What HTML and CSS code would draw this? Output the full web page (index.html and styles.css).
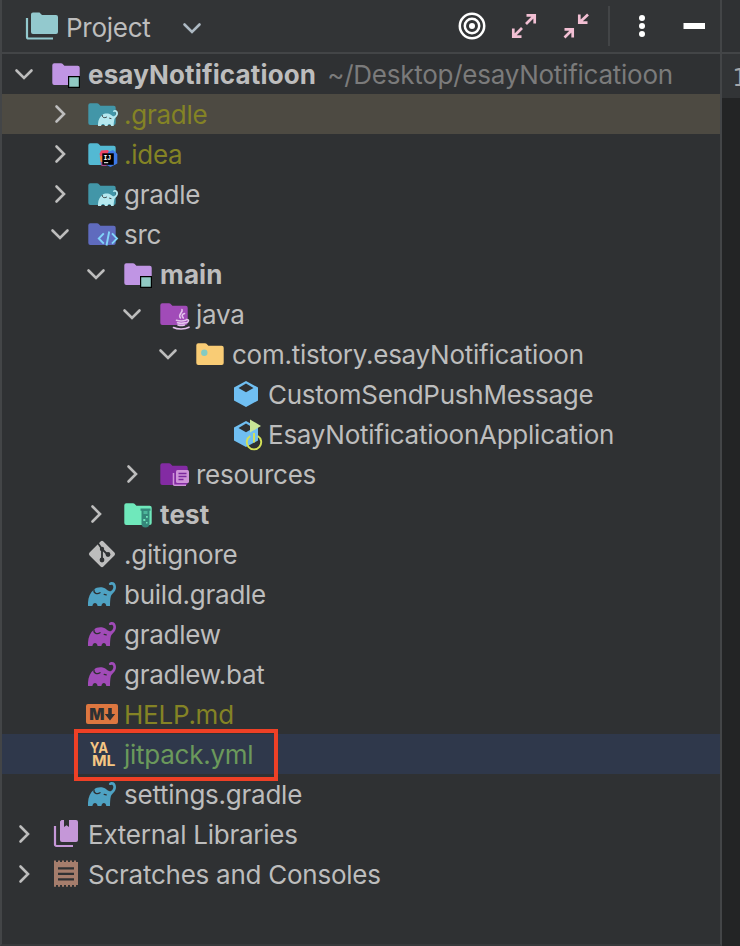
FILE: index.html
```
<!DOCTYPE html>
<html lang="en">
<head>
  <meta charset="UTF-8" />
  <title>Project</title>
  <meta name="viewport" content="width=device-width, initial-scale=1.0" />
  <link rel="stylesheet" href="styles.css">
</head>
<body>
  <!-- Shared icon shapes -->
  <svg class="sprite" width="0" height="0">
    <symbol id="folder" viewBox="0 0 32 32">
      <path d="M4.3 5.2h6.8c.6 0 1 .2 1.4.6l1.9 1.9h13.3a2 2 0 0 1 2 2v15.2a2 2 0 0 1-2 2H4.3a2 2 0 0 1-2-2V7.2a2 2 0 0 1 2-2z" fill="currentColor"/>
    </symbol>
    <symbol id="elephant" viewBox="0 0 28 24" preserveAspectRatio="none">
      <path d="M0 24C-.4 17 1.5 11 6 7.500 8.5 4.800 15 4.500 18 7c1.800 1.600 3.300 2.800 5 2 2.500-1.200 3-4.800 1.500-6-1-.8-2.200.4-3.200-.2-1-.8 0-2.200 1.200-2.500C25.500-.6 28 1.500 28 5c0 5-4.500 6.500-5.200 9.500-.6 2.500-.8 6.500-.8 9.500h-3.700c-.3-4-4.500-4-4.900 0H9.600c-.4-4-4.800-4-5.200 0z" fill="currentColor"/>
      <path class="ear" d="M6 8c-.6 3.200 3.200 4.700 6 2.700M16.200 12.300l2 .5" fill="none" stroke-width="1.3" stroke-linecap="round"/>
    </symbol>
    <symbol id="down" viewBox="0 0 32 32">
      <path d="M8.500 12.500l7.500 7.500 7.500-7.500" fill="none" stroke="currentColor" stroke-width="2.600" stroke-linecap="round"/>
    </symbol>
    <symbol id="right" viewBox="0 0 32 32">
      <path d="M12.500 8.500l7.500 7.500-7.500 7.500" fill="none" stroke="currentColor" stroke-width="2.600" stroke-linecap="round"/>
    </symbol>
    <symbol id="cube" viewBox="0 0 32 32">
      <path fill-rule="evenodd" d="M16 3l12 6.500v13L16 29 4 22.500v-13zM16 5.500L8.500 10 16 14.300 23.500 10z" fill="currentColor"/>
    </symbol>
  </svg>

  <div class="ide">
    <section class="tool-window">
      <header class="toolbar">
        <svg class="icon project-icon" viewBox="0 0 32 32">
          <path d="M7 2.500h6.500L16 5h14a2 2 0 0 1 2 2v15a2 2 0 0 1-2 2H7a2 2 0 0 1-2-2V4.500a2 2 0 0 1 2-2z" fill="#93c9ce"/>
          <path d="M1 8v19a1.500 1.500 0 0 0 1.500 1.500H27" fill="none" stroke="#93c9ce" stroke-width="2.200"/>
        </svg>
        <h1 class="title">Project</h1>
        <svg class="title-arrow" viewBox="0 0 32 32"><use href="#down"/></svg>
        <div class="actions">
          <svg class="icon" viewBox="0 0 32 32" fill="none" stroke="#fff">
            <circle cx="16" cy="16" r="12.200" stroke-width="2.500"/>
            <circle cx="16" cy="16" r="7.200" stroke-width="2.500"/>
            <circle cx="16" cy="16" r="3" fill="#fff" stroke="none"/>
          </svg>
          <svg class="icon" viewBox="0 0 32 32" fill="none" stroke="#f2bfd3" stroke-width="2.700">
            <path d="M18.500 5.300h8.200v8.200M26 6l-8 8M13.500 26.700H5.300v-8.200M6 26l8-8"/>
          </svg>
          <svg class="icon" viewBox="0 0 32 32" fill="none" stroke="#f2bfd3" stroke-width="2.700">
            <path d="M19.300 4.500v8.200h8.200M20 12l8-7.500M4.500 19.300h8.200v8.200M12 20l-7.500 7.500"/>
          </svg>
          <span class="separator"></span>
          <svg class="icon" viewBox="0 0 32 32" fill="#fff">
            <circle cx="16" cy="8" r="3"/><circle cx="16" cy="16" r="3"/><circle cx="16" cy="24" r="3"/>
          </svg>
          <svg class="icon minimize" viewBox="0 0 32 32"><path d="M5.500 13h21.500v6H5.500z" fill="#fff"/></svg>
        </div>
      </header>

      <ul class="tree">
        <li class="row">
          <svg class="twisty"><use href="#down"/></svg>
          <svg class="icon violet" viewBox="0 0 32 32"><use href="#folder"/><path d="M18.600 18.600h10.800v10.800H18.600z" fill="#90c9c3" stroke="#000" stroke-width="1.200"/></svg>
          <span class="name bold">esayNotificatioon</span>
          <span class="path">~/Desktop/esayNotificatioon</span>
        </li>
        <li class="row level-1 hovered">
          <svg class="twisty"><use href="#right"/></svg>
          <svg class="icon teal" viewBox="0 0 32 32"><use href="#folder"/><use class="pale" href="#elephant" x="12" y="12" width="20" height="16"/></svg>
          <span class="name ignored">.gradle</span>
        </li>
        <li class="row level-1">
          <svg class="twisty"><use href="#right"/></svg>
          <svg class="icon cyan" viewBox="0 0 32 32"><use href="#folder"/>
            <path d="M15 12.500l7-.5 3 5-10 4-1.500-5z" fill="#ee4466"/>
            <path d="M13.700 18l4 0v7.500l-3.200-2z" fill="#ef7b36"/>
            <path d="M14.500 24h8l-2 4-5 0z" fill="#a6478f"/>
            <path d="M22 14l5-2 4.300 4v9.500L24.500 29l-4-2z" fill="#3d79e8"/>
            <path d="M16.300 15.300h11.500v11.500H16.300z" fill="#000"/>
            <text class="ij" x="17.500" y="21.500" textLength="7.500">IJ</text>
            <path d="M18 24.200h4.200v1H18z" fill="#fff"/>
          </svg>
          <span class="name ignored">.idea</span>
        </li>
        <li class="row level-1">
          <svg class="twisty"><use href="#right"/></svg>
          <svg class="icon teal" viewBox="0 0 32 32"><use href="#folder"/><use class="pale" href="#elephant" x="12" y="12" width="20" height="16"/></svg>
          <span class="name">gradle</span>
        </li>
        <li class="row level-1">
          <svg class="twisty"><use href="#down"/></svg>
          <svg class="icon indigo" viewBox="0 0 32 32"><use href="#folder"/><path d="M17.800 15.300l-5 5.200 5 5.200M26 15.300l5 5.200-5 5.200M23.200 13.500l-2.700 14" fill="none" stroke="#81d4fa" stroke-width="1.900"/></svg>
          <span class="name">src</span>
        </li>
        <li class="row level-2">
          <svg class="twisty"><use href="#down"/></svg>
          <svg class="icon violet" viewBox="0 0 32 32"><use href="#folder"/><path d="M18.600 18.600h10.800v10.800H18.600z" fill="#90c9c3" stroke="#000" stroke-width="1.200"/></svg>
          <span class="name bold">main</span>
        </li>
        <li class="row level-3">
          <svg class="twisty"><use href="#down"/></svg>
          <svg class="icon purple" viewBox="0 0 32 32"><use href="#folder"/>
            <g fill="none" stroke="#e4c4ec" stroke-width="1.600" stroke-linecap="round">
              <path d="M24 11.500c1.500 3-4.800 4.500-1.500 8.500M26.500 15.500c-3 1-2.800 2.300-1.200 4.500"/>
              <path d="M18.500 22.300c3 .9 6.500.9 9.300 0M19.500 24.800c2.500.7 5 .7 7.500 0M20 27c2 .6 4.500.6 6.500 0M28.500 21.500c3-.4 2.500 3-.8 3.500"/>
              <path d="M15.500 29.500c4 2 11.500 2 15.500-.3"/>
            </g>
          </svg>
          <span class="name">java</span>
        </li>
        <li class="row level-4">
          <svg class="twisty"><use href="#down"/></svg>
          <svg class="icon amber" viewBox="0 0 32 32"><use href="#folder"/><circle cx="10.300" cy="14.800" r="3.200" fill="#83cbc3"/></svg>
          <span class="name">com.tistory.esayNotificatioon</span>
        </li>
        <li class="row level-5">
          <span class="twisty"></span>
          <svg class="icon sky" viewBox="0 0 32 32"><use href="#cube"/></svg>
          <span class="name">CustomSendPushMessage</span>
        </li>
        <li class="row level-5">
          <span class="twisty"></span>
          <svg class="icon sky" viewBox="0 0 32 32"><use href="#cube"/>
            <path d="M20 1.500l11 6.500-11 6.500z" fill="#c8e696"/>
            <path d="M20.300 18a7.200 7.200 0 1 0 7.400 0M24 15v9.500" fill="none" stroke="#d4e157" stroke-width="1.900"/>
          </svg>
          <span class="name">EsayNotificatioonApplication</span>
        </li>
        <li class="row level-3">
          <svg class="twisty"><use href="#right"/></svg>
          <svg class="icon plum" viewBox="0 0 32 32"><use href="#folder"/>
            <rect x="18" y="12" width="13" height="13" rx="1.500" fill="#ce93d8"/>
            <path d="M15.500 15v11.300a1 1 0 0 0 1 1H28" fill="none" stroke="#ce93d8" stroke-width="1.500"/>
            <path d="M20.500 15.500h8M20.500 18.500h8M20.500 21.500h5" stroke="#7b2a9d" stroke-width="1.300"/>
          </svg>
          <span class="name">resources</span>
        </li>
        <li class="row level-2">
          <svg class="twisty"><use href="#right"/></svg>
          <svg class="icon mint" viewBox="0 0 32 32"><use href="#folder"/>
            <path d="M18.500 10.500h10v2.200h-1v12.800a4 4 0 0 1-8 0V12.700h-1z" fill="#35877a"/>
            <path d="M21.500 13h4v3h-4z" fill="#4db69b"/>
            <path d="M24 18h1.800v1.800H24zM21.300 21h2v2h-2zM24 24h1.500v1.500H24z" fill="#6fe8bb"/>
          </svg>
          <span class="name bold">test</span>
        </li>
        <li class="row level-1">
          <span class="twisty"></span>
          <svg class="icon" viewBox="0 0 32 32">
            <rect x="6.200" y="6.200" width="19.600" height="19.600" rx="2" transform="rotate(45 16 16)" fill="#bdbdbd"/>
            <path d="M11.500 4.500l4.500 6.500v12M16.500 11.500l5 5" fill="none" stroke="#2f3133" stroke-width="1.800"/>
            <g fill="#2f3133"><circle cx="16" cy="11" r="2.200"/><circle cx="16" cy="22" r="2.400"/><circle cx="22" cy="16.500" r="2.400"/></g>
          </svg>
          <span class="name">.gitignore</span>
        </li>
        <li class="row level-1">
          <span class="twisty"></span>
          <svg class="icon gradle-blue" viewBox="0 0 32 32"><use href="#elephant" x="2" y="4" width="28" height="24"/></svg>
          <span class="name">build.gradle</span>
        </li>
        <li class="row level-1">
          <span class="twisty"></span>
          <svg class="icon purple" viewBox="0 0 32 32"><use href="#elephant" x="2" y="4" width="28" height="24"/></svg>
          <span class="name">gradlew</span>
        </li>
        <li class="row level-1">
          <span class="twisty"></span>
          <svg class="icon purple" viewBox="0 0 32 32"><use href="#elephant" x="2" y="4" width="28" height="24"/></svg>
          <span class="name">gradlew.bat</span>
        </li>
        <li class="row level-1">
          <span class="twisty"></span>
          <svg class="icon" viewBox="0 0 32 32">
            <rect x="0" y="6" width="32" height="20" rx="2" fill="#dd7740"/>
            <text class="md" x="3.300" y="22" textLength="15" lengthAdjust="spacingAndGlyphs">M</text>
            <path d="M22.200 10h3.600v6h3.400L24 22.500 18.800 16h3.400z" fill="#2f3133"/>
          </svg>
          <span class="name ignored">HELP.md</span>
        </li>
        <li class="row level-1 selected">
          <span class="twisty"></span>
          <svg class="icon" viewBox="0 0 32 32">
            <text class="yaml" x="3.700" y="15" textLength="18.500" lengthAdjust="spacingAndGlyphs">YA</text>
            <text class="yaml" x="6" y="28" textLength="23.500" lengthAdjust="spacingAndGlyphs">ML</text>
          </svg>
          <span class="name added">jitpack.yml</span>
          <span class="marker"></span>
        </li>
        <li class="row level-1">
          <span class="twisty"></span>
          <svg class="icon gradle-blue" viewBox="0 0 32 32"><use href="#elephant" x="2" y="4" width="28" height="24"/></svg>
          <span class="name">settings.gradle</span>
        </li>
        <li class="row">
          <svg class="twisty"><use href="#right"/></svg>
          <svg class="icon" viewBox="0 0 32 32">
            <path d="M11.500 2H14v7l2.500-1.800L19 9V2h7a2 2 0 0 1 2 2v18a2 2 0 0 1-2 2H12a2 2 0 0 1-2-2V3.500z" fill="#c597d8"/>
            <path d="M5 8v18.500A1.500 1.500 0 0 0 6.500 28H23" fill="none" stroke="#c597d8" stroke-width="2.200"/>
          </svg>
          <span class="name">External Libraries</span>
        </li>
        <li class="row">
          <svg class="twisty"><use href="#right"/></svg>
          <svg class="icon" viewBox="0 0 32 32">
            <path d="M4 4h24v23H4z" fill="#a57d6c"/>
            <path d="M4 3.500h24M4 27.700h24" stroke="#a57d6c" stroke-width="2" stroke-dasharray="2 2"/>
            <path d="M8 10.300h16M8 15.800h16M8 21.300h16" stroke="#2f3133" stroke-width="2.300"/>
          </svg>
          <span class="name">Scratches and Consoles</span>
        </li>
      </ul>
    </section>

    <aside class="editor">
      <div class="tabs"></div>
      <div class="gutter">1</div>
    </aside>
  </div>
</body>
</html>
```
FILE: styles.css
```
:root {
  --bg: #2f3133;
  --bar: #323436;
  --line: #434547;
  --text: #bdbdbd;
  --ignored: #848325;
}

* {
  box-sizing: border-box;
}

body {
  margin: 0;
  background: var(--bg);
  color: var(--text);
  font-family: Inter, "Liberation Sans", sans-serif;
  font-size: 26px;
  letter-spacing: -0.25px;
}

.sprite {
  position: absolute;
}

.ide {
  display: flex;
  width: 740px;
  height: 946px;
  overflow: hidden;
}

.tool-window {
  width: 722px;
  flex-shrink: 0;
  border-left: 2px solid var(--line);
  border-right: 2px solid var(--line);
  border-bottom: 2px solid #37393b;
}

.toolbar {
  display: flex;
  align-items: center;
  height: 54px;
  padding: 0 10px 0 24px;
  background: var(--bar);
  border-bottom: 2px solid var(--line);
}

.icon {
  width: 32px;
  height: 32px;
  flex-shrink: 0;
  overflow: visible;
}

.title {
  width: 94px;
  margin: 0 0 0 8px;
  padding-top: 2px;
  font-size: 26px;
  font-weight: 400;
}

.title-arrow {
  width: 32px;
  height: 32px;
  margin: 3px 0 0 16px;
  color: #adb9c3;
}

.actions {
  display: flex;
  align-items: center;
  gap: 20px;
  margin-left: auto;
}

.separator {
  width: 2px;
  height: 40px;
  margin: 0 -4px;
  background: var(--line);
}

.tree {
  margin: 0;
  padding: 0;
  list-style: none;
}

.row {
  position: relative;
  display: flex;
  align-items: center;
  height: 40px;
  padding-left: 6px;
  white-space: nowrap;
}

.level-1 { padding-left: 42px; }
.level-2 { padding-left: 78px; }
.level-3 { padding-left: 114px; }
.level-4 { padding-left: 150px; }
.level-5 { padding-left: 186px; }

.hovered {
  background: #4d4a42;
}

.selected {
  background: #2f384b;
}

.twisty {
  width: 32px;
  height: 32px;
  margin-right: 10px;
  flex-shrink: 0;
}

.name {
  margin-left: 6px;
  padding-top: 1px;
}

.bold {
  font-weight: 700;
  letter-spacing: 0.15px;
}

.path {
  margin-left: 11px;
  padding-top: 1px;
  color: #7b7b7b;
}

.ignored { color: var(--ignored); }
.added { color: #6b995b; }

/* red frame around the new file */
.marker {
  position: absolute;
  left: 72px;
  top: -5px;
  width: 204px;
  height: 52px;
  border: 4px solid #ee4026;
}

/* icon colours */
.violet { color: #c095e4; }
.teal { color: #4296a8; }
.cyan { color: #53b9d3; }
.indigo { color: #5f6bbe; }
.purple { color: #a14bb8; }
.amber { color: #f9cc75; }
.sky { color: #70bff2; }
.plum { color: #832ba3; }
.mint { color: #6fe8bb; }
.gradle-blue { color: #4ea2c3; }
.pale { color: #b5e8ef; }

.ear {
  stroke: #2f3133;
}

.ij {
  fill: #fff;
  font: 700 6.5px "Liberation Mono", monospace;
}

.md {
  fill: var(--bg);
  font: 900 16.5px Inter, sans-serif;
}

.yaml {
  fill: #f5c683;
  font: 700 15px Inter, sans-serif;
  letter-spacing: 0;
}

.editor {
  flex: 1;
  background: #232425;
}

.tabs {
  height: 54px;
  border-bottom: 2px solid var(--line);
  background: var(--bg);
}

.gutter {
  height: 44px;
  padding-left: 10px;
  background: var(--bar);
  color: #a4a6a8;
  font: 25px/47px "DejaVu Sans Mono", monospace;
}
```
